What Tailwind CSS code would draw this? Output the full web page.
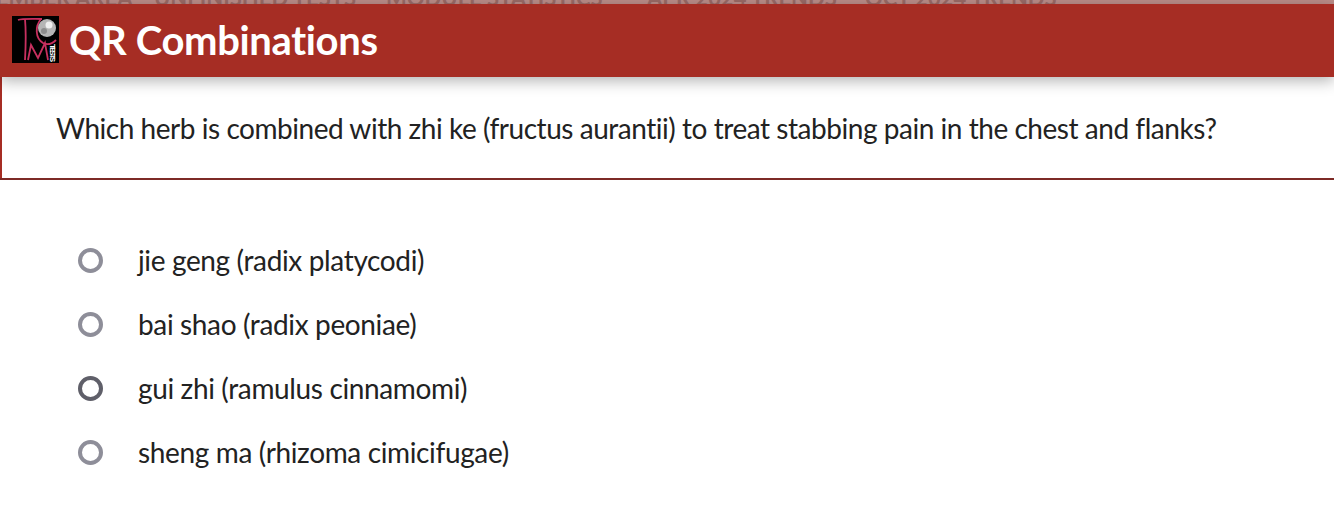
<!DOCTYPE html>
<html lang="en">
<head>
    <meta charset="UTF-8">
    <title>QR Combinations</title>
    <script src="https://cdn.jsdelivr.net/npm/@tailwindcss/browser@4"></script>
</head>
<body class="bg-white h-[522px] overflow-hidden font-['Lato',sans-serif] text-[#222]">
    <!-- nav behind the modal, only its bottom edge shows -->
    <div class="h-[4px] bg-[#bb8d89] overflow-hidden flex items-end whitespace-nowrap text-[#9a6a66] text-[22px] font-bold leading-[22px]">
        <div class="flex shrink-0 ml-[-25px] mb-[-5px]">
            <span class="w-[179px]">MEMBER AREA</span>
            <span class="w-[232px]">UNFINISHED TESTS</span>
            <span class="w-[261px]">MODULE STATISTICS</span>
            <span class="w-[218px]">APR 2024 TRENDS</span>
            <span>OCT 2024 TRENDS</span>
        </div>
    </div>

    <div class="border-l-2 border-[#a62d24] h-[174px]">
        <div class="ml-[-2px] h-[73px] bg-[#a62d24] flex items-center pl-[12px] shadow-[0_4px_14px_rgba(0,0,0,0.3)] relative">
            <svg width="47" height="47" viewBox="0 0 47 47" class="shrink-0 mt-[-2px]">
                <rect width="47" height="47" fill="#000"/>
                <g fill="none" stroke="#c8305f" stroke-width="1.8">
                    <path d="M6 4C10 2.500 20 3 30 3"/>
                    <path d="M13 3C14 14 14 26 13 44"/>
                    <path d="M16 44L19 29L26 42L33 27L36 44"/>
                    <path d="M29 3C23 10 23 22 31 27C35 29 40 28 44 24"/>
                </g>
                <circle cx="35" cy="12" r="9" fill="#b5b5b5"/>
                <circle cx="37" cy="9" r="3.500" fill="#efefef"/>
                <circle cx="32" cy="15" r="3" fill="#8c8c8c"/>
                <text x="28" y="-38" transform="rotate(90)" font-family="Liberation Sans" font-size="8" font-weight="700" fill="#fff" textLength="18">TESTS</text>
            </svg>
            <h1 class="ml-[10px] text-white text-[40px] font-bold leading-none tracking-[-0.35px] mt-[-1px]">QR Combinations</h1>
        </div>
        <p class="pl-[54px] pt-[34px] text-[28px] leading-[34px] tracking-[-0.46px]">Which herb is combined with zhi ke (fructus aurantii) to treat stabbing pain in the chest and flanks?</p>
    </div>
    <div class="h-[2px] bg-[#7d2a26]"></div>

    <div class="pt-[48px] pl-[78px] flex flex-col text-[#222] text-[28px] leading-[64px] tracking-[-0.36px]">
        <label class="flex items-center h-[64px]">
            <span class="w-[25px] h-[25px] rounded-full border-[4px] border-[#8e8e99]"></span>
            <span class="ml-[35px]">jie geng (radix platycodi)</span>
        </label>
        <label class="flex items-center h-[64px]">
            <span class="w-[25px] h-[25px] rounded-full border-[4px] border-[#8e8e99]"></span>
            <span class="ml-[35px]">bai shao (radix peoniae)</span>
        </label>
        <label class="flex items-center h-[64px]">
            <span class="w-[25px] h-[25px] rounded-full border-[4px] border-[#5f5f69]"></span>
            <span class="ml-[35px]">gui zhi (ramulus cinnamomi)</span>
        </label>
        <label class="flex items-center h-[64px]">
            <span class="w-[25px] h-[25px] rounded-full border-[4px] border-[#8e8e99]"></span>
            <span class="ml-[35px]">sheng ma (rhizoma cimicifugae)</span>
        </label>
    </div>
</body>
</html>
